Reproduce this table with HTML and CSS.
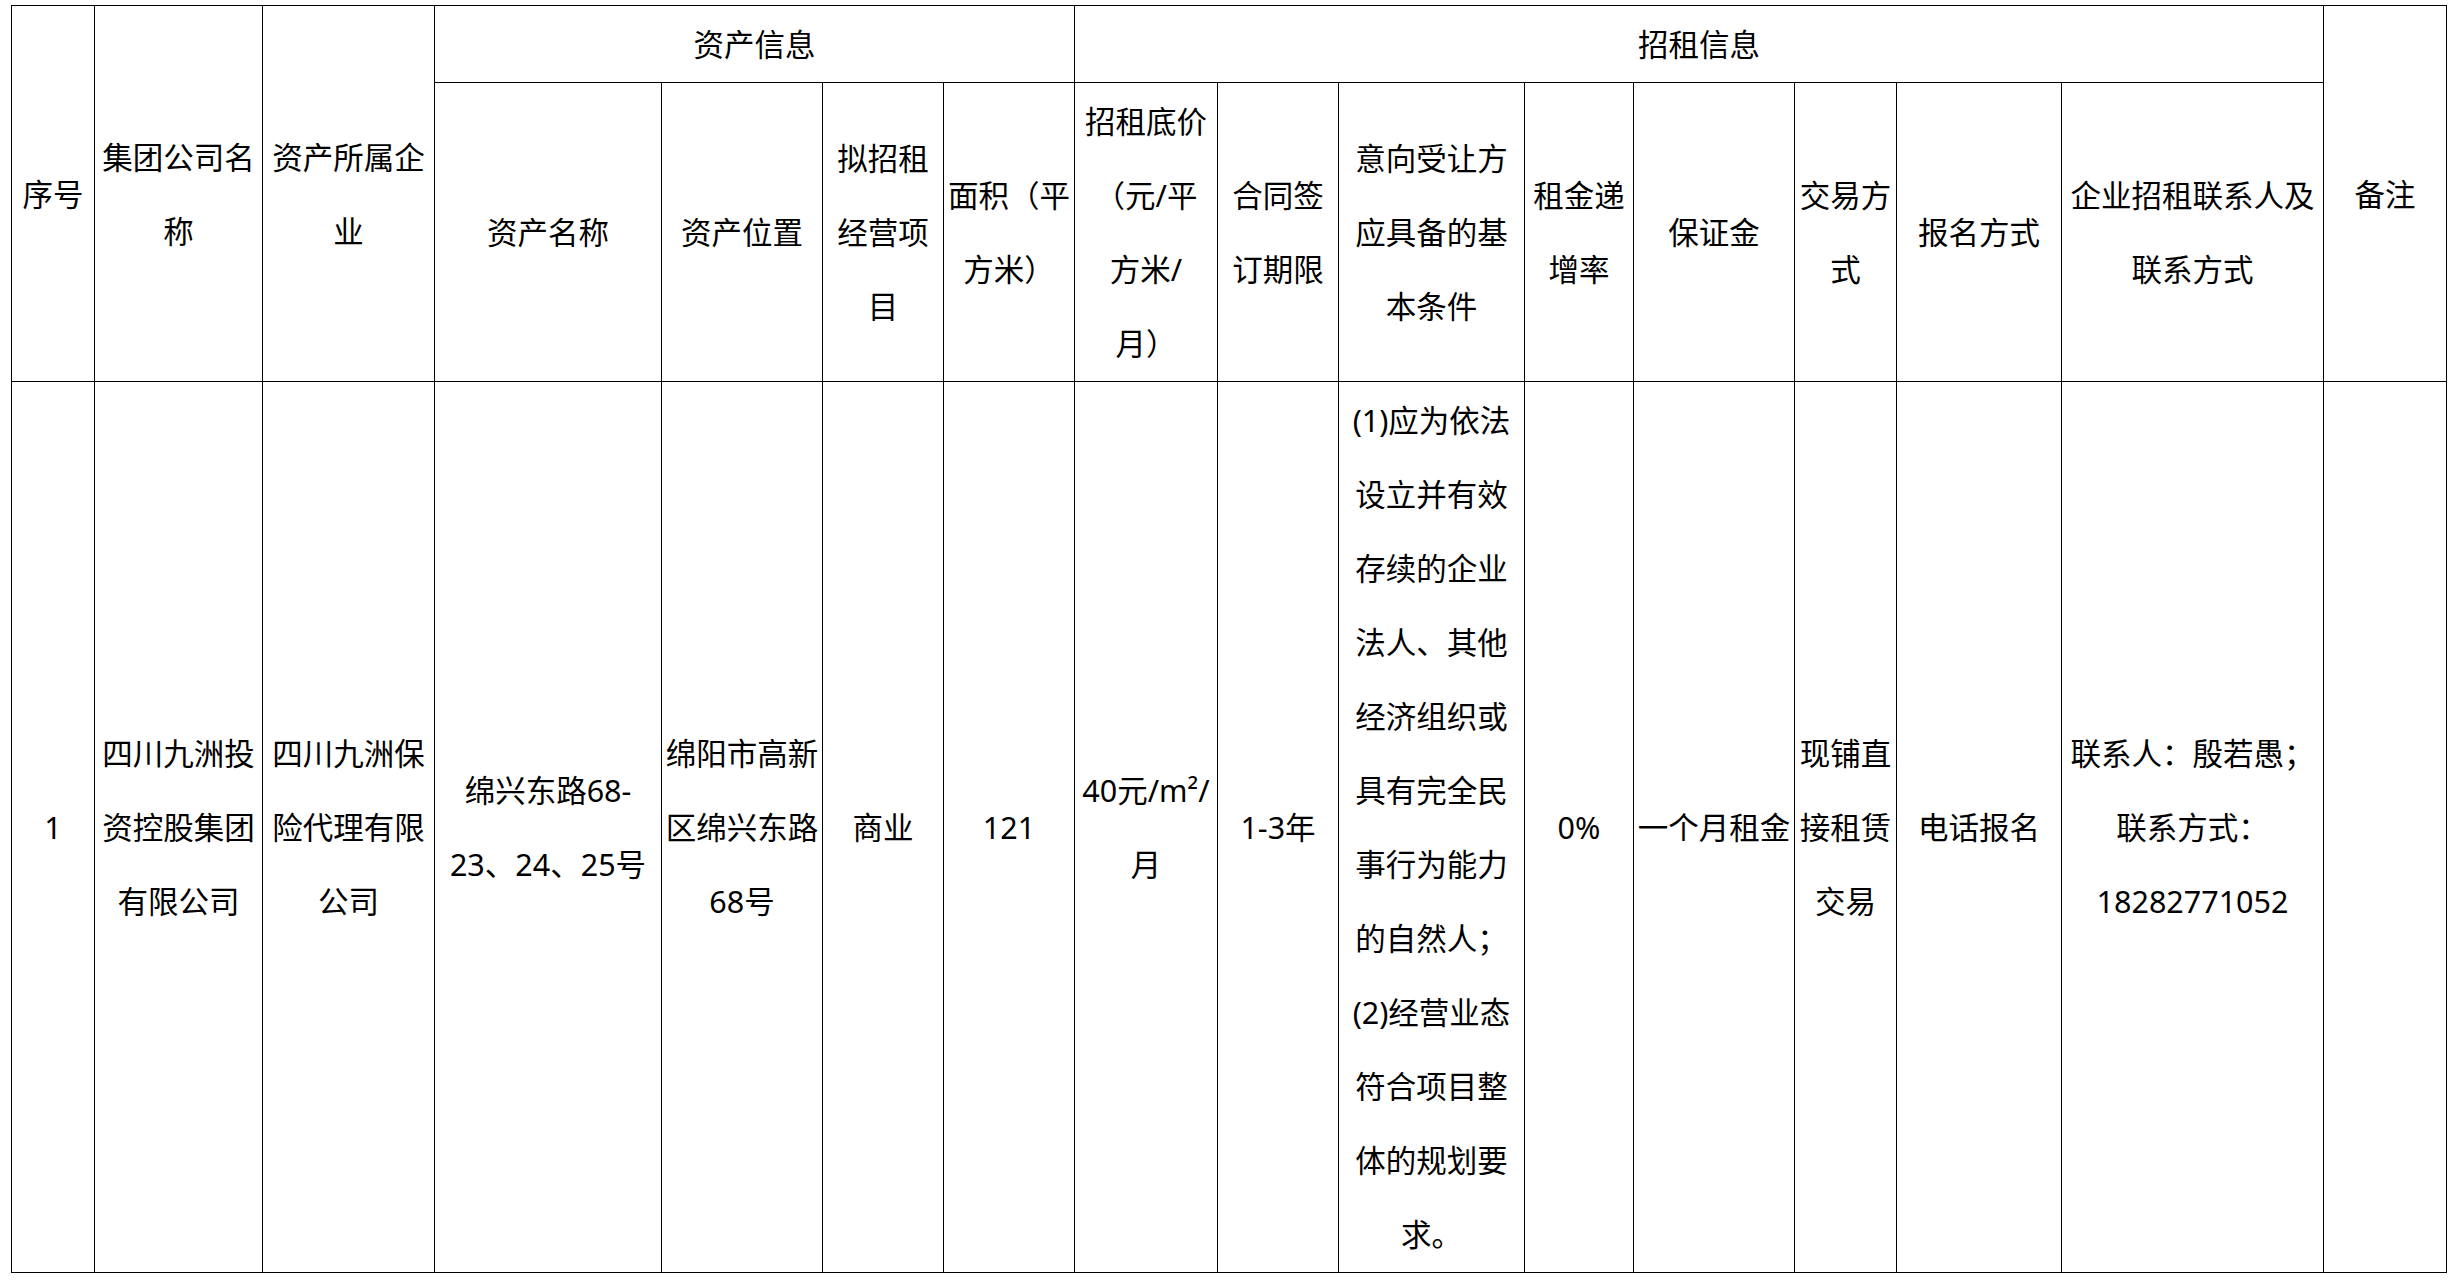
FILE: index.html
```html
<!DOCTYPE html>
<html lang="zh-CN">
<head>
<meta charset="utf-8">
<title>招租信息表</title>
<link rel="stylesheet" href="styles.css">
</head>
<body>
<table class="sheet">
  <colgroup>
    <col class="c1"><col class="c2"><col class="c3"><col class="c4">
    <col class="c5"><col class="c6"><col class="c7"><col class="c8">
    <col class="c9"><col class="c10"><col class="c11"><col class="c12">
    <col class="c13"><col class="c14"><col class="c15"><col class="c16">
  </colgroup>
  <thead>
    <tr class="row-group">
      <th rowspan="2">序号</th>
      <th rowspan="2">集团公司名<br>称</th>
      <th rowspan="2">资产所属企<br>业</th>
      <th colspan="4">资产信息</th>
      <th colspan="8">招租信息</th>
      <th rowspan="2">备注</th>
    </tr>
    <tr class="row-head">
      <th>资产名称</th>
      <th>资产位置</th>
      <th>拟招租<br>经营项<br>目</th>
      <th>面积（平<br>方米）</th>
      <th>招租底价<br>（元/平<br>方米/<br>月）</th>
      <th>合同签<br>订期限</th>
      <th>意向受让方<br>应具备的基<br>本条件</th>
      <th>租金递<br>增率</th>
      <th>保证金</th>
      <th>交易方<br>式</th>
      <th>报名方式</th>
      <th>企业招租联系人及<br>联系方式</th>
    </tr>
  </thead>
  <tbody>
    <tr class="row-body">
      <td>1</td>
      <td>四川九洲投<br>资控股集团<br>有限公司</td>
      <td>四川九洲保<br>险代理有限<br>公司</td>
      <td>绵兴东路68-<br>23、24、25号</td>
      <td>绵阳市高新<br>区绵兴东路<br>68号</td>
      <td>商业</td>
      <td>121</td>
      <td>40元/m²/<br>月</td>
      <td>1-3年</td>
      <td>(1)应为依法<br>设立并有效<br>存续的企业<br>法人、其他<br>经济组织或<br>具有完全民<br>事行为能力<br>的自然人；<br>(2)经营业态<br>符合项目整<br>体的规划要<br>求。</td>
      <td>0%</td>
      <td>一个月租金</td>
      <td>现铺直<br>接租赁<br>交易</td>
      <td>电话报名</td>
      <td>联系人：殷若愚；<br>联系方式：<br>18282771052</td>
      <td></td>
    </tr>
  </tbody>
</table>
</body>
</html>
```

FILE: styles.css
```css
html, body {
  margin: 0;
  padding: 0;
  background: #ffffff;
}

body {
  font-family: "Noto Sans", "Noto Sans CJK SC", sans-serif;
  color: #000000;
}

.sheet {
  margin: 5px 0 0 11px;
  width: 2436px;
  table-layout: fixed;
  border-collapse: collapse;
}

.sheet th,
.sheet td {
  border: 1px solid #000000;
  padding: 1px 2px;
  font-size: 30.5px;
  font-weight: normal;
  line-height: 74px;
  text-align: center;
  vertical-align: middle;
  white-space: nowrap;
  overflow: visible;
}

.c1 { width: 83px; }
.c2 { width: 168px; }
.c3 { width: 172px; }
.c4 { width: 227px; }
.c5 { width: 161px; }
.c6 { width: 121px; }
.c7 { width: 131px; }
.c8 { width: 143px; }
.c9 { width: 121px; }
.c10 { width: 186px; }
.c11 { width: 109px; }
.c12 { width: 161px; }
.c13 { width: 102px; }
.c14 { width: 165px; }
.c15 { width: 262px; }
.c16 { width: 123px; }
```
